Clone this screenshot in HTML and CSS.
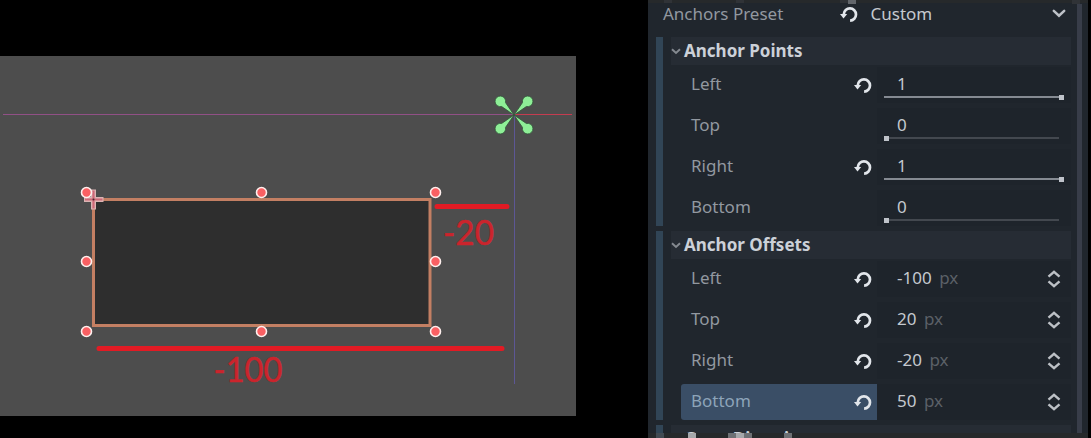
FILE: index.html
```html
<!DOCTYPE html>
<html lang="en">
<head>
<meta charset="utf-8">
<title>Anchor inspector</title>
<link rel="stylesheet" href="styles.css">
</head>
<body>
<svg class="defs" width="0" height="0">
  <symbol id="reset" viewBox="0 0 18 18"><path d="M3.8 9.2a6.1 6.1 0 1 1 6.3 6.4" fill="none" stroke="currentColor" stroke-width="2.7"/><path d="M0 9h7.2L3.5 13.6z" fill="currentColor"/></symbol>
  <symbol id="fold" viewBox="0 0 10 7"><path d="M1 1.2 5 5l4-3.8" fill="none" stroke="currentColor" stroke-width="1.9"/></symbol>
  <symbol id="drop" viewBox="0 0 14 9"><path d="M1.8 1.8 7 6.7l5.2-4.9" fill="none" stroke="currentColor" stroke-width="2.5" stroke-linecap="round"/></symbol>
  <symbol id="spin" viewBox="0 0 14 18"><path d="M1.5 6.7 7 1.8l5.5 4.9M1.5 11.3 7 16.2l5.5-4.9" fill="none" stroke="currentColor" stroke-width="2.4"/></symbol>
</svg>
<main class="screen">
  <section class="viewport">
    <svg class="scene" viewBox="0 0 576 360" width="576" height="360">
      <path class="axis-pink" d="M3 58.5H514"/>
      <path class="axis-red" d="M514 58.5H572"/>
      <path class="axis-blue" d="M514.5 59V328"/>
      <rect class="box" x="93.5" y="143.5" width="336.5" height="126"/>
      <g class="anchor">
        <path d="M514 59 505.500 46.600A5.300 5.300 0 1 0 501.600 50.500z"/>
        <path d="M514 59 522.500 46.600A5.300 5.300 0 1 1 526.400 50.500z"/>
        <path d="M514 59 505.500 71.400A5.300 5.300 0 1 1 501.600 67.500z"/>
        <path d="M514 59 522.500 71.400A5.300 5.300 0 1 0 526.400 67.500z"/>
      </g>
      <path class="pivot-edge" d="M84 143.500H103.500M93.500 133.500V153.500"/>
      <path class="pivot" d="M85 143.500H102.500M93.500 134.500V152.500"/>
      <circle class="pivot-dot" cx="93.500" cy="143.500" r="1"/>
      <g class="handles">
        <circle cx="86.500" cy="136.500" r="5"/><circle cx="261.500" cy="136.500" r="5"/><circle cx="435.500" cy="136.500" r="5"/>
        <circle cx="86.500" cy="205.500" r="5"/><circle cx="435.500" cy="205.500" r="5"/>
        <circle cx="86.500" cy="275.500" r="5"/><circle cx="261.500" cy="275.500" r="5"/><circle cx="435.500" cy="275.500" r="5"/>
      </g>
      <path class="measure" d="M437 150.500H507M99 292.500H502"/>
      <text class="note" x="443" y="189" textLength="51" lengthAdjust="spacingAndGlyphs">-20</text>
      <text class="note" x="213.500" y="325.500" textLength="69" lengthAdjust="spacingAndGlyphs">-100</text>
    </svg>
  </section>
  <aside class="inspector">
    <div class="fields">
      <div class="preset">
        <span class="preset-name">Anchors Preset</span>
        <svg class="reset"><use href="#reset"/></svg>
        <span class="preset-value">Custom</span>
        <svg class="drop"><use href="#drop"/></svg>
      </div>
      <div class="group">
        <h2 class="group-title"><svg class="fold"><use href="#fold"/></svg>Anchor Points</h2>
        <div class="row"><div class="label">Left<svg class="reset"><use href="#reset"/></svg></div><div class="slider full"><span>1</span><i class="track"></i></div></div>
        <div class="row"><div class="label">Top</div><div class="slider"><span>0</span><i class="track"></i></div></div>
        <div class="row"><div class="label">Right<svg class="reset"><use href="#reset"/></svg></div><div class="slider full"><span>1</span><i class="track"></i></div></div>
        <div class="row"><div class="label">Bottom</div><div class="slider"><span>0</span><i class="track"></i></div></div>
      </div>
      <div class="group">
        <h2 class="group-title"><svg class="fold"><use href="#fold"/></svg>Anchor Offsets</h2>
        <div class="row"><div class="label">Left<svg class="reset"><use href="#reset"/></svg></div><div class="number">-100<em>px</em><svg class="spin"><use href="#spin"/></svg></div></div>
        <div class="row"><div class="label">Top<svg class="reset"><use href="#reset"/></svg></div><div class="number">20<em>px</em><svg class="spin"><use href="#spin"/></svg></div></div>
        <div class="row"><div class="label">Right<svg class="reset"><use href="#reset"/></svg></div><div class="number">-20<em>px</em><svg class="spin"><use href="#spin"/></svg></div></div>
        <div class="row"><div class="label selected">Bottom<svg class="reset"><use href="#reset"/></svg></div><div class="number">50<em>px</em><svg class="spin"><use href="#spin"/></svg></div></div>
      </div>
      <div class="group">
        <h2 class="group-title last">Grow Direction</h2>
      </div>
    </div>
    <div class="scrollbar"></div>
    <svg class="mosaic" viewBox="0 0 440 438" width="440" height="438">
      <path fill="#26292b" d="M0 0h440v3H0zM0 433h440v5H0z"/>
      <path fill="#303337" d="M16 0h8v3h-8zM88 0h8v3h-8zM192 0h8v3h-8zM424 0h8v4h-8z"/>
      <path fill="#62666b" d="M200 0h8v4h-8z"/>
      <path fill="#414a52" d="M8 433h8v5H8z"/>
      <path fill="#a5a7aa" d="M40 433h8v5h-8zM88 433h8v5h-8z"/>
      <path fill="#6d7074" d="M80 433h8v5h-8zM96 433h8v5h-8zM136 433h8v5h-8z"/>
    </svg>
  </aside>
</main>
</body>
</html>
```

FILE: styles.css
```css
* { box-sizing: border-box; }
body { margin: 0; background: #000; overflow: hidden; }
.defs { display: block; }
.screen {
  display: flex;
  justify-content: space-between;
  width: 1091px;
  height: 438px;
  padding-right: 3px;
  overflow: hidden;
  font-family: "Noto Sans", sans-serif;
  font-size: 17px;
  color: #c5c9cf;
}
.viewport { width: 576px; height: 360px; margin-top: 56px; background: #4d4d4d; }
.scene { display: block; }
.axis-pink { stroke: #a8519a; opacity: .75; }
.axis-red { stroke: #c43c50; }
.axis-blue { stroke: #5d5795; }
.box { fill: #2e2e2e; stroke: #c37f63; stroke-width: 3; }
.anchor path { fill: #8eef97; stroke: #315339; stroke-width: .8; }
.pivot-edge { fill: none; stroke: #dbb4b3; stroke-width: 5; }
.pivot { fill: none; stroke: #cf6878; stroke-width: 2.2; }
.pivot-dot { fill: #432b30; }
.handles circle { fill: #fa6063; stroke: #fff0ee; stroke-width: 1.6; }
.measure { fill: none; stroke: #e21b24; stroke-width: 5; stroke-linecap: round; }
.note { fill: #cb242c; stroke: #cb242c; stroke-width: .5; font-family: Lato, sans-serif; font-size: 34.5px; }

.inspector {
  position: relative;
  display: flex;
  justify-content: space-between;
  width: 440px;
  height: 438px;
  padding: 0 6px 0 8px;
  background: #20262d;
  overflow: hidden;
}
.fields { display: flex; flex-direction: column; gap: 5px; width: 415px; }
.preset { display: flex; align-items: center; height: 32px; flex: none; padding: 0 0 5px 7px; }
.preset-name { width: 177px; padding-bottom: 1px; color: #9298a0; }
.preset-value { margin-left: 12.5px; flex: 1; }
.reset { width: 18px; height: 18px; color: #e2e6eb; flex: none; }
.drop { width: 14px; height: 9px; margin-right: 5px; color: #bec2c8; }
.group {
  display: flex;
  flex-direction: column;
  gap: 5px;
  flex: none;
  padding-left: 15px;
  border-left: 7px solid #314556;
}
.group-title {
  display: flex;
  align-items: center;
  height: 28px;
  margin: 0 0 -3px -7px;
  padding-bottom: 2px;
  background: #262c34;
  font-size: 17px;
  font-weight: 700;
  color: #ccd1d8;
}
.group-title.last { padding-left: 13px; }
.fold { width: 10px; height: 7px; margin: 3px 3px 0 0; color: #858a91; }
.row { display: flex; height: 36px; padding-left: 3px; }
.label {
  display: flex;
  align-items: center;
  justify-content: space-between;
  width: 196px;
  padding: 0 5px 3px 10px;
  border-radius: 3px 0 0 3px;
  color: #9298a0;
}
.label .reset { margin-top: 3px; }
.label.selected { background: #3a4e66; color: #8da4b9; }
.slider, .number { flex: 1; background: #1e242b; }
.slider { display: flex; flex-direction: column; padding: 0 10px 0 7px; }
.slider span { height: 29px; padding-left: 13px; line-height: 34px; }
.track { display: block; position: relative; width: 175px; height: 2px; background: #43484f; }
.track::after { content: ""; position: absolute; left: 0; top: -1px; width: 5px; height: 5px; background: #bfc3ca; }
.full .track { background: #858a92; }
.full .track::after { left: 175px; }
.number { display: flex; align-items: center; padding: 0 10px 3px 20px; }
.number em { margin-left: 7.5px; flex: 1; font-style: normal; color: #5b6067; }
.spin { width: 14px; height: 18px; margin-top: 3px; color: #bdc1c6; }
.scrollbar { width: 5px; height: 429px; margin-top: 4px; background: #383d49; }
.mosaic { position: absolute; left: 0; top: 0; }
```
